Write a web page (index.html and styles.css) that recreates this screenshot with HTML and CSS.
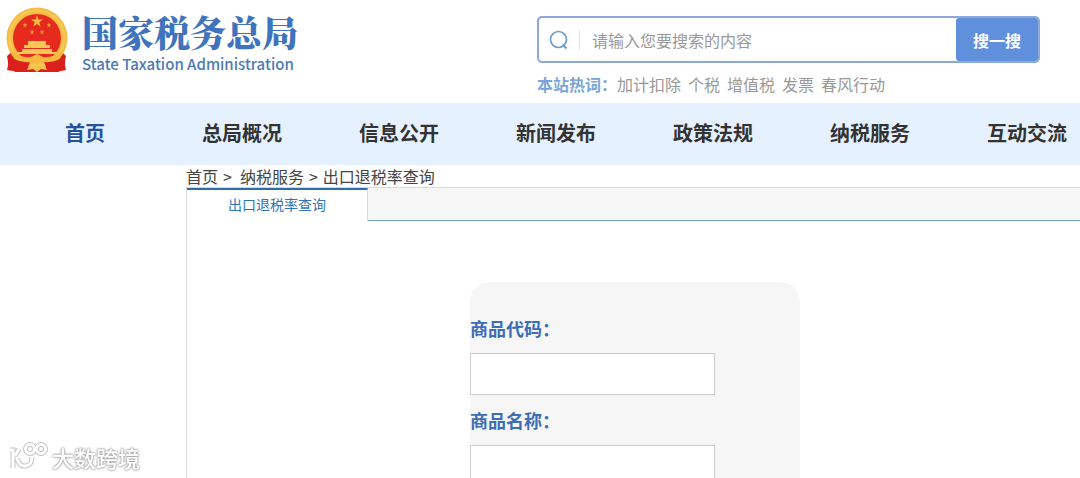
FILE: index.html
```
<!DOCTYPE html>
<html lang="zh-CN">
<head>
  <meta charset="UTF-8" />
  <title>国家税务总局 - 出口退税率查询</title>
  <link rel="stylesheet" href="styles.css">
</head>
<body>

  <!-- Header -->
  <header class="header">
    <a href="#" class="logo">
      <svg class="emblem" viewBox="0 0 62 66" width="62" height="66" aria-hidden="true">
        <path d="M7 44 L1 49 Q3 57 1 63 L12 65 H50 L60 63 Q58 57 60 49 L55 44 Z" fill="#d9201d"/>
        <circle cx="31" cy="31" r="30.5" fill="#f5bd45"/>
        <circle cx="31" cy="31" r="27.5" fill="none" stroke="#f7c854" stroke-width="2"/>
        <circle cx="31" cy="31" r="24" fill="#e62a1d"/>
        <path d="M31 8 L32.400 12.500 H37 L33.300 15.200 L34.700 19.600 L31 16.900 L27.300 19.600 L28.700 15.200 L25 12.500 H29.600 Z" fill="#f8b83d"/>
        <g fill="#f3983a">
          <path id="star" d="M19 15.500 L19.700 17.300 H21.500 L20 18.500 L20.600 20.400 L19 19.300 L17.400 20.400 L18 18.500 L16.500 17.300 H18.300 Z"/>
          <use href="#star" x="24"/>
          <use href="#star" x="7" y="7"/>
          <use href="#star" x="17" y="7"/>
        </g>
        <path d="M22 34 H40 V38 H44 V41 H18 V38 H22 Z" fill="#f8c652"/>
        <path d="M16 42 H46 V45 H51 V47 H11 V45 H16 Z" fill="#f8c652"/>
        <path d="M6 44 Q14 51 25 50 L31 47 L37 50 Q48 51 56 44 L54 52 Q46 55 38 54 L31 57 L24 54 Q16 55 8 52 Z" fill="#f5b940"/>
        <path d="M8 52 Q16 56 24 55 L20 65 H9 Z M54 52 Q46 56 38 55 L42 65 H53 Z" fill="#d9201d"/>
        <path d="M23 59 L31 61 L39 59 L41 63 L35 62 L31 65 L27 62 L21 63 Z" fill="#f5c04a"/>
      </svg>
      <span class="logo-text">
        <span class="logo-cn">国家税务总局</span>
        <span class="logo-en">State Taxation Administration</span>
      </span>
    </a>

    <div class="search">
      <form class="search-box">
        <svg class="search-icon" viewBox="0 0 20 20" width="20" height="20" aria-hidden="true">
          <circle cx="9.500" cy="9.500" r="8" fill="none" stroke="#6e9bcb" stroke-width="1.700"/>
          <path d="M13.500 14.500 L17.500 18.500" stroke="#6e9bcb" stroke-width="2" fill="none"/>
        </svg>
        <input type="text" class="search-input" placeholder="请输入您要搜索的内容" aria-label="搜索" />
        <button type="submit" class="search-btn">搜一搜</button>
      </form>
      <div class="hot-words">
        <strong>本站热词：</strong>
        <a href="#">加计扣除</a>
        <a href="#">个税</a>
        <a href="#">增值税</a>
        <a href="#">发票</a>
        <a href="#">春风行动</a>
      </div>
    </div>
  </header>

  <!-- Main navigation -->
  <nav class="nav">
    <a href="#" class="active">首页</a>
    <a href="#">总局概况</a>
    <a href="#">信息公开</a>
    <a href="#">新闻发布</a>
    <a href="#">政策法规</a>
    <a href="#">纳税服务</a>
    <a href="#">互动交流</a>
  </nav>

  <!-- Content -->
  <main class="content">
    <div class="breadcrumb">
      <a href="#">首页</a>
      <span>&gt;</span>
      <a href="#">纳税服务</a>
      <span>&gt;</span>
      <a href="#">出口退税率查询</a>
    </div>
    <div class="panel">
      <div class="tabs">
        <button type="button" class="tab">出口退税率查询</button>
      </div>
      <form class="query-form">
        <label for="goodsCode">商品代码：</label>
        <input type="text" id="goodsCode" />
        <label for="goodsName">商品名称：</label>
        <input type="text" id="goodsName" />
      </form>
    </div>
  </main>

  <!-- Watermark -->
  <div class="watermark">
    <svg viewBox="0 0 40 30" width="40" height="30" fill="none" aria-hidden="true">
      <g stroke="#c4c4c4" stroke-width="5">
        <path d="M2 8 H5 V26 M11 7 L7 14 M9 17 Q12 25 18 24 Q24 23 24 15"/>
        <circle cx="22" cy="7" r="4.500"/>
        <circle cx="33" cy="7" r="4.500"/>
      </g>
      <g stroke="#fff" stroke-width="3">
        <path d="M2 8 H5 V26 M11 7 L7 14 M9 17 Q12 25 18 24 Q24 23 24 15"/>
        <circle cx="22" cy="7" r="4.500"/>
        <circle cx="33" cy="7" r="4.500"/>
      </g>
    </svg>
    <span>大数跨境</span>
  </div>

</body>
</html>
```

FILE: styles.css
```
* { box-sizing: border-box; margin: 0; padding: 0; }

html, body {
  height: 100%;
  overflow: hidden;
}

body {
  font-family: "Noto Sans CJK SC", sans-serif;
  font-size: 16px;
  color: #444;
  background: #fff;
}

a {
  color: inherit;
  text-decoration: none;
}

input, button {
  font-family: inherit;
}

/* HEADER */
.header {
  display: flex;
  justify-content: space-between;
  align-items: flex-start;
  height: 103px;
  padding: 0 40px 0 6px;
}

.logo {
  display: flex;
  gap: 14px;
  padding-top: 7px;
}

.logo-text {
  display: flex;
  flex-direction: column;
  padding-top: 2px;
  color: #3f74bd;
  white-space: nowrap;
}

.logo-cn {
  font-family: "Noto Serif CJK SC", "Noto Sans CJK SC", serif;
  font-size: 36px;
  font-weight: 900;
  line-height: 46px;
}

.logo-en {
  font-size: 15px;
  font-weight: 500;
  line-height: 18px;
  color: #4d7ab5;
}

/* SEARCH */
.search {
  width: 503px;
  padding-top: 16px;
}

.search-box {
  display: flex;
  align-items: center;
  height: 47px;
  border: 2px solid #8aa9d6;
  border-radius: 5px;
}

.search-icon {
  margin: 0 10px;
}

.search-input {
  flex: 1;
  min-width: 0;
  height: 20px;
  padding-left: 12px;
  border: none;
  border-left: 1px solid #dde3ea;
  outline: none;
  background: transparent;
  font-size: 16px;
}

.search-input::placeholder {
  color: #999;
}

.search-btn {
  width: 82px;
  height: 43px;
  border: none;
  border-radius: 3px;
  background: #6090dc;
  color: #fff;
  font-size: 16px;
  font-weight: bold;
  cursor: pointer;
}

.hot-words {
  display: flex;
  gap: 7px;
  margin-top: 9px;
  line-height: 24px;
  color: #999;
  white-space: nowrap;
}

.hot-words strong {
  margin-right: -7px;
  color: #7ba5d8;
}

/* NAV */
.nav {
  display: flex;
  gap: 77px;
  height: 62px;
  padding-left: 45px;
  background: #e5f1fe;
  font-size: 20px;
  font-weight: bold;
  line-height: 60px;
  color: #333;
}

.nav a {
  flex: none;
  min-width: 80px;
  text-align: center;
}

.nav .active {
  color: #27509b;
}

/* CONTENT */
.content {
  margin-left: 186px;
}

.breadcrumb {
  display: flex;
  gap: 5px;
  line-height: 22px;
}

.breadcrumb a:nth-of-type(2) {
  margin-left: 3px;
}

.panel {
  border-left: 1px solid #d9d9d9;
}

.tabs {
  height: 34px;
  border-top: 1px solid #d9d9d9;
  border-bottom: 1px solid #6f9cc9;
  background: #f6f6f6;
}

.tab {
  display: block;
  width: 181px;
  height: 33px;
  padding-bottom: 3px;
  border: none;
  border-top: 2px solid #2d6cb0;
  border-right: 1px solid #d9d9d9;
  background: #fff;
  color: #2f75b5;
  font-size: 14px;
  cursor: pointer;
}

/* QUERY FORM */
.query-form {
  width: 330px;
  margin: 61px 0 0 283px;
  padding: 29px 0 40px;
  border-radius: 20px;
  background: #f6f6f6;
}

.query-form label {
  display: block;
  line-height: 34px;
  font-size: 18px;
  font-weight: bold;
  color: #3c6db5;
}

.query-form input {
  display: block;
  width: 245px;
  height: 42px;
  margin: 8px 0;
  padding: 0 10px;
  border: 1px solid #ccc;
  background: #fff;
  font-size: 16px;
}

/* WATERMARK */
.watermark {
  position: fixed;
  left: 8px;
  bottom: 6px;
  display: flex;
  align-items: center;
  gap: 4px;
  color: #fff;
  font-size: 22px;
  font-weight: 500;
  line-height: 30px;
  text-shadow: 0 0 2px #999, 0 0 2px #aaa, 0 0 3px #bbb;
}
```
